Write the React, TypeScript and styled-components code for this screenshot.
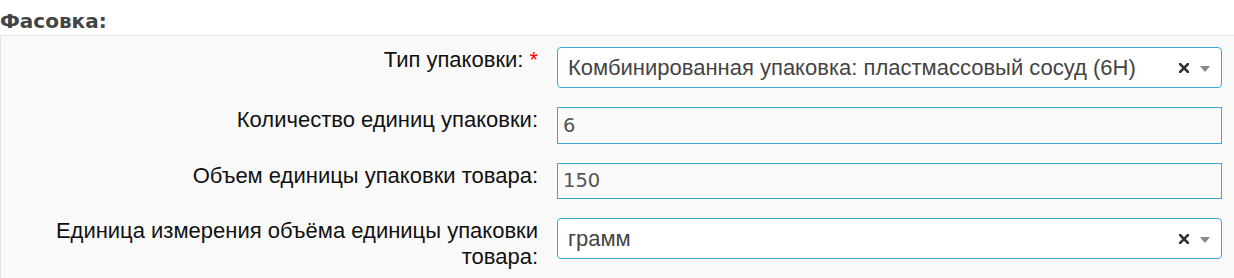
import React from 'react';
import styled, { createGlobalStyle } from 'styled-components';

const GlobalStyle = createGlobalStyle`
  body {
    margin: 0;
    background: #ffffff;
    font-family: "Liberation Sans", Arial, sans-serif;
  }
`;

const SectionTitle = styled.h4`
  margin: 0;
  padding: 9px 0 2px 0;
  font-family: "DejaVu Sans", Verdana, sans-serif;
  font-weight: bold;
  font-size: 20px;
  line-height: 24px;
  color: #444444;
`;

const Panel = styled.div`
  background: #f9f9f9;
  border-top: 1px solid #e4e4e4;
  border-left: 1px solid #e4e4e4;
  padding: 11px 12px 20px 0;
  display: flex;
  flex-direction: column;
  gap: 19px;
`;

const Row = styled.div`
  display: grid;
  grid-template-columns: 540px 1fr;
  column-gap: 16px;
  align-items: start;
`;

const Label = styled.label`
  text-align: right;
  padding-right: 3px;
  font-size: 22px;
  line-height: 26px;
  color: #111111;
`;

const Required = styled.span`
  color: #ff0000;
  margin-left: 6px;
`;

const SelectBox = styled.div`
  height: 41px;
  box-sizing: border-box;
  border: 1px solid #3aa7dd;
  border-radius: 4px;
  background: #ffffff;
  display: flex;
  align-items: center;
  padding: 0 11px 0 10px;
  font-size: 22px;
  color: #444444;
`;

const SelectValue = styled.span`
  flex: 1;
  white-space: nowrap;
  overflow: hidden;
`;

const ClearIcon = styled.svg`
  width: 10px;
  height: 10px;
  margin-right: 11px;
`;

const Arrow = styled.span`
  width: 0;
  height: 0;
  border-left: 5px solid transparent;
  border-right: 5px solid transparent;
  border-top: 6px solid #888888;
  margin-top: 2px;
`;

const TextInput = styled.input`
  height: 36.5px;
  box-sizing: border-box;
  width: 100%;
  border: 1px solid #3aa7dd;
  border-radius: 0;
  background: #fafafa;
  padding: 0 5px;
  font-family: "DejaVu Sans", Verdana, sans-serif;
  font-size: 19.5px;
  color: #555555;
  outline: none;
`;

const Select: React.FC<{ value: string }> = ({ value }) => (
  <SelectBox>
    <SelectValue>{value}</SelectValue>
    <ClearIcon viewBox="0 0 10 10">
      <path d="M1 1L9 9M9 1L1 9" stroke="#333" strokeWidth="2.6" strokeLinecap="square" />
    </ClearIcon>
    <Arrow />
  </SelectBox>
);

const App: React.FC = () => {
  return (
    <>
      <GlobalStyle />
      <SectionTitle>Фасовка:</SectionTitle>
      <Panel>
        <Row>
          <Label>
            Тип упаковки:<Required>*</Required>
          </Label>
          <Select value="Комбинированная упаковка: пластмассовый сосуд (6Н)" />
        </Row>
        <Row>
          <Label>Количество единиц упаковки:</Label>
          <TextInput defaultValue="6" />
        </Row>
        <Row>
          <Label>Объем единицы упаковки товара:</Label>
          <TextInput defaultValue="150" />
        </Row>
        <Row>
          <Label>Единица измерения объёма единицы упаковки товара:</Label>
          <Select value="грамм" />
        </Row>
      </Panel>
    </>
  );
};

export default App;
